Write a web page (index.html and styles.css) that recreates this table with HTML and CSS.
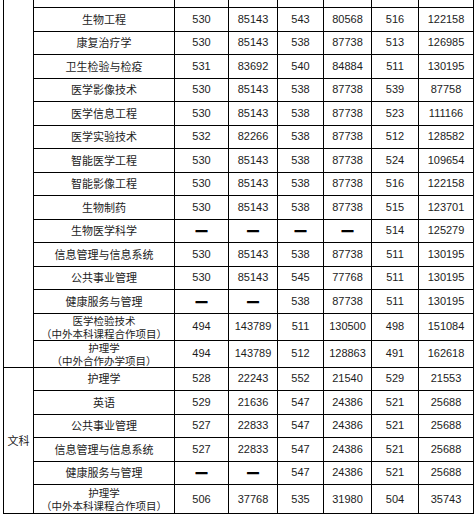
FILE: index.html
```html
<!DOCTYPE html>
<html lang="zh">
<head>
<meta charset="utf-8">
<title>录取分数</title>
<link rel="stylesheet" href="styles.css">
</head>
<body>
<table class="scores">
  <colgroup>
    <col class="c-cat"><col class="c-major"><col class="c-n1"><col class="c-n2"><col class="c-n3"><col class="c-n4"><col class="c-n5"><col class="c-n6">
  </colgroup>
  <tbody>
    <tr class="r-hidden"><td class="cat" rowspan="16"></td><td class="major"></td><td></td><td></td><td></td><td></td><td></td><td></td></tr>
    <tr class="r1"><td class="major">生物工程</td><td>530</td><td>85143</td><td>543</td><td>80568</td><td>516</td><td>122158</td></tr>
    <tr class="r2"><td class="major">康复治疗学</td><td>530</td><td>85143</td><td>538</td><td>87738</td><td>513</td><td>126985</td></tr>
    <tr class="r1"><td class="major">卫生检验与检疫</td><td>531</td><td>83692</td><td>540</td><td>84884</td><td>511</td><td>130195</td></tr>
    <tr class="r2"><td class="major">医学影像技术</td><td>530</td><td>85143</td><td>538</td><td>87738</td><td>539</td><td>87758</td></tr>
    <tr class="r1"><td class="major">医学信息工程</td><td>530</td><td>85143</td><td>538</td><td>87738</td><td>523</td><td>111166</td></tr>
    <tr class="r2"><td class="major">医学实验技术</td><td>532</td><td>82266</td><td>538</td><td>87738</td><td>512</td><td>128582</td></tr>
    <tr class="r1"><td class="major">智能医学工程</td><td>530</td><td>85143</td><td>538</td><td>87738</td><td>524</td><td>109654</td></tr>
    <tr class="r2"><td class="major">智能影像工程</td><td>530</td><td>85143</td><td>538</td><td>87738</td><td>516</td><td>122158</td></tr>
    <tr class="r1"><td class="major">生物制药</td><td>530</td><td>85143</td><td>538</td><td>87738</td><td>515</td><td>123701</td></tr>
    <tr class="r2"><td class="major">生物医学科学</td><td><span class="dash">—</span></td><td><span class="dash">—</span></td><td><span class="dash">—</span></td><td><span class="dash">—</span></td><td>514</td><td>125279</td></tr>
    <tr class="r1"><td class="major">信息管理与信息系统</td><td>530</td><td>85143</td><td>538</td><td>87738</td><td>511</td><td>130195</td></tr>
    <tr class="r2"><td class="major">公共事业管理</td><td>530</td><td>85143</td><td>545</td><td>77768</td><td>511</td><td>130195</td></tr>
    <tr class="r1"><td class="major">健康服务与管理</td><td><span class="dash">—</span></td><td><span class="dash">—</span></td><td>538</td><td>87738</td><td>511</td><td>130195</td></tr>
    <tr class="r-two-a"><td class="major two"><span class="ln">医学检验技术</span><span class="ln">（中外本科课程合作项目）</span></td><td>494</td><td>143789</td><td>511</td><td>130500</td><td>498</td><td>151084</td></tr>
    <tr class="r-two-b"><td class="major two"><span class="ln">护理学</span><span class="ln">（中外合作办学项目）</span></td><td>494</td><td>143789</td><td>512</td><td>128863</td><td>491</td><td>162618</td></tr>
    <tr class="r1"><td class="cat" rowspan="6">文科</td><td class="major">护理学</td><td>528</td><td>22243</td><td>552</td><td>21540</td><td>529</td><td>21553</td></tr>
    <tr class="r2"><td class="major">英语</td><td>529</td><td>21636</td><td>547</td><td>24386</td><td>521</td><td>25688</td></tr>
    <tr class="r1"><td class="major">公共事业管理</td><td>527</td><td>22833</td><td>547</td><td>24386</td><td>521</td><td>25688</td></tr>
    <tr class="r2"><td class="major">信息管理与信息系统</td><td>527</td><td>22833</td><td>547</td><td>24386</td><td>521</td><td>25688</td></tr>
    <tr class="r1"><td class="major">健康服务与管理</td><td><span class="dash">—</span></td><td><span class="dash">—</span></td><td>547</td><td>24386</td><td>521</td><td>25688</td></tr>
    <tr class="r-last"><td class="major two"><span class="ln">护理学</span><span class="ln">（中外本科课程合作项目）</span></td><td>506</td><td>37768</td><td>535</td><td>31980</td><td>504</td><td>35743</td></tr>
  </tbody>
</table>
</body>
</html>
```

FILE: styles.css
```css
html, body {
  margin: 0;
  padding: 0;
  background: #ffffff;
  overflow: hidden;
}

body {
  width: 475px;
  height: 515px;
}

.scores {
  border-collapse: collapse;
  table-layout: fixed;
  width: 471px;
  margin: -17px 0 0 3px;
  font-family: "Liberation Sans", Arial, sans-serif;
  font-size: 11px;
  color: #1c1c1c;
}

.scores td {
  border: 1px solid #000;
  padding: 0;
  text-align: center;
  vertical-align: middle;
  line-height: 13px;
  white-space: nowrap;
  overflow: visible;
}

.c-cat { width: 30px; }
.c-major { width: 141px; }
.c-n1 { width: 54px; }
.c-n2 { width: 49px; }
.c-n3 { width: 46px; }
.c-n4 { width: 48px; }
.c-n5 { width: 47px; }
.c-n6 { width: 55px; }

.scores td.major,
.scores td.cat {
  font-family: "Noto Sans CJK SC", sans-serif;
  font-size: 11px;
  color: #222;
}

.scores td.two {
  font-size: 10.5px;
}

.ln {
  display: block;
  line-height: 13px;
  height: 13px;
  overflow: visible;
}

.dash {
  font-family: "Liberation Sans", Arial, sans-serif;
  font-weight: 700;
  font-size: 12px;
  color: #000;
  text-shadow: 0 1px 0 #000;
}

.r-hidden { height: 24px; }
.r1 { height: 23.5px; }
.r2 { height: 23.5px; }
.r-two-a { height: 26.5px; }
.r-two-b { height: 25px; }
.r-last { height: 29px; }
```
